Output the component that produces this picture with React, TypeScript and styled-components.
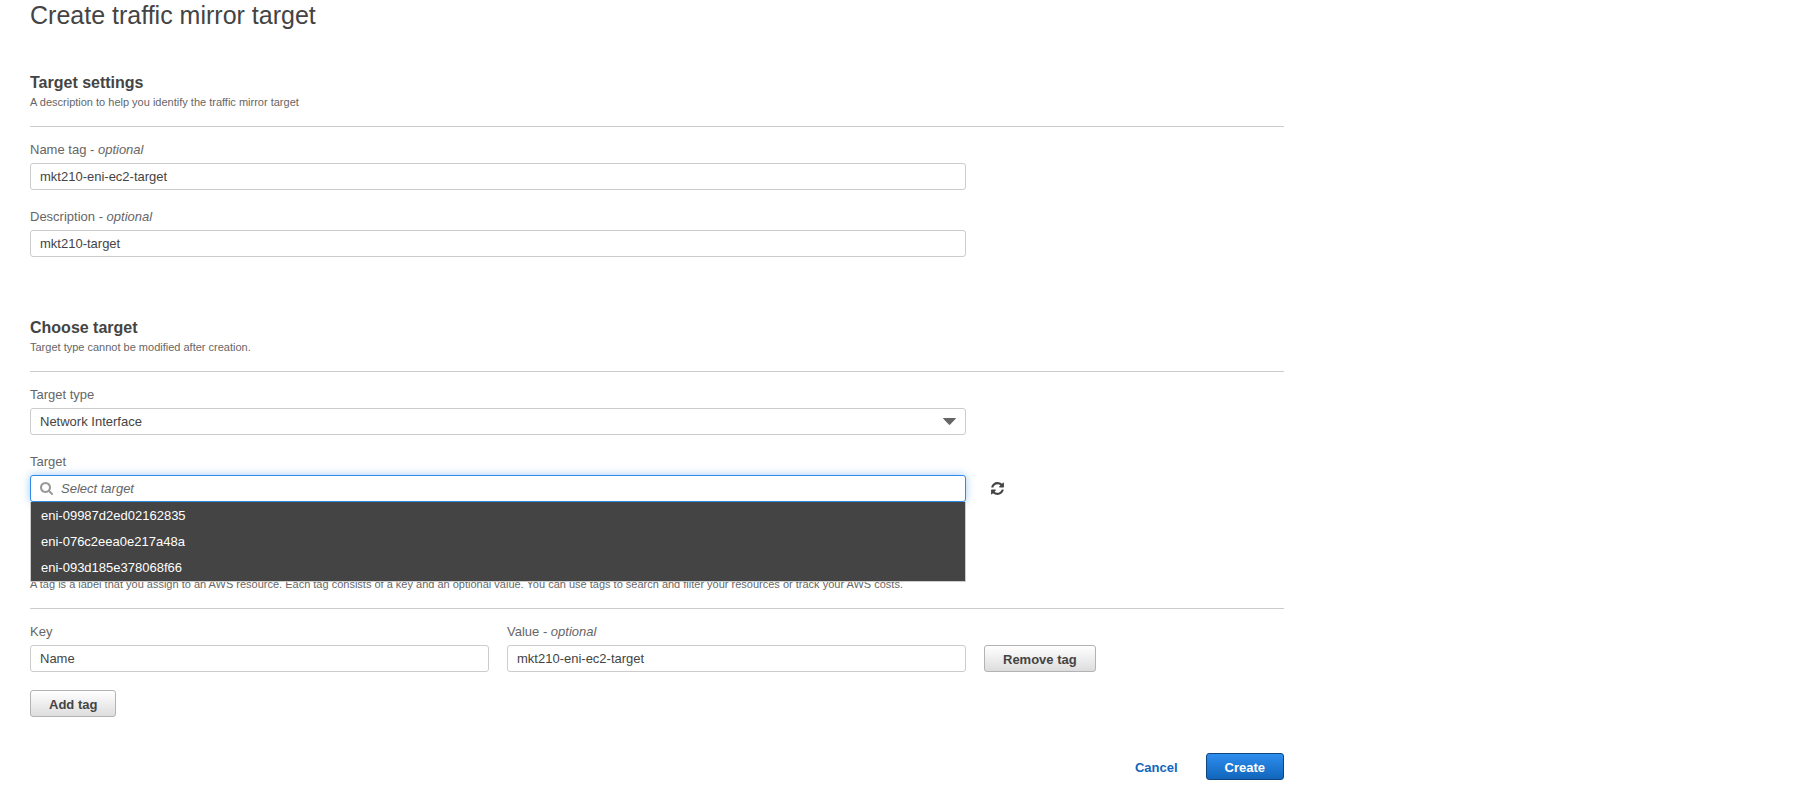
import React from "react";
import styled, { createGlobalStyle, css } from "styled-components";

const GlobalStyle = createGlobalStyle`
  *, *::before, *::after { box-sizing: border-box; }
  body {
    margin: 0;
    background: #fff;
    color: #444;
    font-family: "Liberation Sans", Arial, Helvetica, sans-serif;
    font-size: 13px;
    line-height: 18px;
  }
`;

const Page = styled.main`
  max-width: 1314px;
  padding: 0 30px 14px;
`;

const Title = styled.h1`
  margin: 0 0 42px;
  font-size: 25px;
  line-height: 30px;
  font-weight: 400;
`;

const Section = styled.section<{ $gap?: number }>`
  margin-top: ${(p) => p.$gap ?? 0}px;
`;

const SectionHeader = styled.header`
  padding-bottom: 16px;
  margin-bottom: 14px;
  border-bottom: 1px solid #ccc;
`;

const SectionTitle = styled.h2`
  margin: 0;
  font-size: 16px;
  line-height: 22px;
  font-weight: 700;
`;

const SectionHint = styled.p`
  margin: 0;
  color: #666;
  font-size: 11px;
  line-height: 16px;
`;

const Field = styled.div`
  display: flex;
  flex-direction: column;
  gap: 4px;
  min-width: 0;
`;

const FormGrid = styled.div`
  display: grid;
  grid-template-columns: minmax(0, 1fr) 300px;
  column-gap: 18px;
  row-gap: 18px;
  align-items: end;

  > ${Field} {
    grid-column: 1;
  }
`;

const FieldPair = styled.div`
  display: grid;
  grid-template-columns: 1fr 1fr;
  column-gap: 18px;
`;

const Label = styled.label`
  color: #666;
`;

const controlBox = css`
  width: 100%;
  height: 27px;
  border: 1px solid #ccc;
  border-radius: 3px;
  background: #fff;
  color: #444;
  font: inherit;
  outline: none;
`;

const TextInput = styled.input`
  ${controlBox}
  padding: 0 9px;
`;

const ControlWrap = styled.div`
  position: relative;
`;

const Select = styled.select`
  ${controlBox}
  display: block;
  appearance: none;
  padding: 0 30px 0 9px;
`;

const Caret = styled.svg`
  position: absolute;
  top: 10px;
  right: 10px;
  fill: #666;
  pointer-events: none;
`;

const SearchInput = styled.input`
  ${controlBox}
  display: block;
  padding: 0 9px 0 30px;
  border-color: #2e8ae6;
  box-shadow: 0 0 8px rgba(46, 138, 230, 0.45);

  &::placeholder {
    color: #666;
    font-style: italic;
    opacity: 1;
  }
`;

const SearchIcon = styled.svg`
  position: absolute;
  top: 7px;
  left: 10px;
  fill: #999;
  pointer-events: none;
`;

const Menu = styled.ul`
  position: absolute;
  top: 100%;
  left: 0;
  right: 0;
  z-index: 1;
  margin: 0;
  padding: 1px 0 0;
  border: 1px solid #ccc;
  border-top: 0;
  background: #444;
  list-style: none;
`;

const MenuItem = styled.li`
  padding: 0 10px;
  color: #fff;
  line-height: 26px;
`;

const RefreshButton = styled.button`
  display: flex;
  align-items: center;
  justify-self: start;
  height: 27px;
  padding: 0 6px;
  border: 0;
  background: none;
  fill: #444;
`;

const Button = styled.button<{ $primary?: boolean }>`
  justify-self: start;
  height: 27px;
  padding: 2px 18px 0;
  border: 1px solid ${(p) => (p.$primary ? "#0d4580" : "#b3b3b3")};
  border-radius: 3px;
  background: ${(p) =>
    p.$primary
      ? "linear-gradient(#2e8dee, #1166bb)"
      : "linear-gradient(#ffffff, #dddddd)"};
  color: ${(p) => (p.$primary ? "#fff" : "#444")};
  font: inherit;
  font-weight: 700;
`;

const AddRow = styled.div`
  display: flex;
  margin-top: 18px;
`;

const Actions = styled.footer`
  display: flex;
  justify-content: flex-end;
  align-items: center;
  gap: 28px;
  margin-top: 36px;
`;

const CancelLink = styled.a`
  padding-top: 2px;
  color: #1166bb;
  font-weight: 700;
  text-decoration: none;
`;

const interfaces = [
  "eni-09987d2ed02162835",
  "eni-076c2eea0e217a48a",
  "eni-093d185e378068f66",
];

export default function App() {
  return (
    <>
      <GlobalStyle />
      <Page>
        <Title>Create traffic mirror target</Title>

        <Section>
          <SectionHeader>
            <SectionTitle>Target settings</SectionTitle>
            <SectionHint>
              A description to help you identify the traffic mirror target
            </SectionHint>
          </SectionHeader>
          <FormGrid>
            <Field>
              <Label htmlFor="name-tag">
                Name tag - <em>optional</em>
              </Label>
              <TextInput id="name-tag" defaultValue="mkt210-eni-ec2-target" />
            </Field>
            <Field>
              <Label htmlFor="description">
                Description - <em>optional</em>
              </Label>
              <TextInput id="description" defaultValue="mkt210-target" />
            </Field>
          </FormGrid>
        </Section>

        <Section $gap={60}>
          <SectionHeader>
            <SectionTitle>Choose target</SectionTitle>
            <SectionHint>
              Target type cannot be modified after creation.
            </SectionHint>
          </SectionHeader>
          <FormGrid>
            <Field>
              <Label htmlFor="target-type">Target type</Label>
              <ControlWrap>
                <Select id="target-type">
                  <option>Network Interface</option>
                </Select>
                <Caret width="13" height="7" viewBox="0 0 13 7">
                  <path d="M0.6 0h11.8q.9 0 .3.7L7.2 6.6q-.7.7-1.4 0L.3.7Q-.3 0 .6 0z" />
                </Caret>
              </ControlWrap>
            </Field>
            <Field>
              <Label htmlFor="target">Target</Label>
              <ControlWrap>
                <SearchInput
                  id="target"
                  role="combobox"
                  aria-expanded="true"
                  aria-controls="target-options"
                  placeholder="Select target"
                />
                <SearchIcon width="13" height="13" viewBox="64 128 1664 1664">
                  <path d="M1216 832q0-185-131.5-316.5t-316.5-131.5-316.5 131.5-131.5 316.5 131.5 316.5 316.5 131.5 316.5-131.5 131.5-316.5zm512 832q0 52-38 90t-90 38q-54 0-90-38l-343-342q-179 124-399 124-143 0-273.5-55.5t-225-150-150-225-55.5-273.5 55.5-273.5 150-225 225-150 273.5-55.5 273.5 55.5 225 150 150 225 55.5 273.5q0 220-124 399l343 343q37 37 37 90z" />
                </SearchIcon>
                <Menu id="target-options" role="listbox">
                  {interfaces.map((id) => (
                    <MenuItem key={id} role="option">
                      {id}
                    </MenuItem>
                  ))}
                </Menu>
              </ControlWrap>
            </Field>
            <RefreshButton type="button" aria-label="Refresh">
              <svg width="15" height="15" viewBox="0 0 1792 1792">
                <path d="M1639 1056q0 5-1 7-64 268-268 434.5t-478 166.5q-146 0-282.5-55t-243.5-157l-129 129q-19 19-45 19t-45-19-19-45v-448q0-26 19-45t45-19h448q26 0 45 19t19 45-19 45l-137 137q71 66 161 102t187 36q134 0 250-65t186-179q11-17 53-117 8-23 30-23h192q13 0 22.5 9.5t9.5 22.5zm25-800v448q0 26-19 45t-45 19h-448q-26 0-45-19t-19-45 19-45l138-138q-148-137-349-137-134 0-250 65t-186 179q-11 17-53 117-8 23-30 23h-199q-13 0-22.5-9.5t-9.5-22.5v-7q65-268 270-434.5t480-166.5q146 0 284 55.5t245 156.5l130-129q19-19 45-19t45 19 19 45z" />
              </svg>
            </RefreshButton>
          </FormGrid>
        </Section>

        <Section $gap={74}>
          <SectionHeader>
            <SectionHint>
              A tag is a label that you assign to an AWS resource. Each tag
              consists of a key and an optional value. You can use tags to
              search and filter your resources or track your AWS costs.
            </SectionHint>
          </SectionHeader>
          <FormGrid>
            <FieldPair>
              <Field>
                <Label htmlFor="tag-key">Key</Label>
                <TextInput id="tag-key" defaultValue="Name" />
              </Field>
              <Field>
                <Label htmlFor="tag-value">
                  Value - <em>optional</em>
                </Label>
                <TextInput
                  id="tag-value"
                  defaultValue="mkt210-eni-ec2-target"
                />
              </Field>
            </FieldPair>
            <Button type="button">Remove tag</Button>
          </FormGrid>
          <AddRow>
            <Button type="button">Add tag</Button>
          </AddRow>
        </Section>

        <Actions>
          <CancelLink href="#">Cancel</CancelLink>
          <Button type="submit" $primary>
            Create
          </Button>
        </Actions>
      </Page>
    </>
  );
}
